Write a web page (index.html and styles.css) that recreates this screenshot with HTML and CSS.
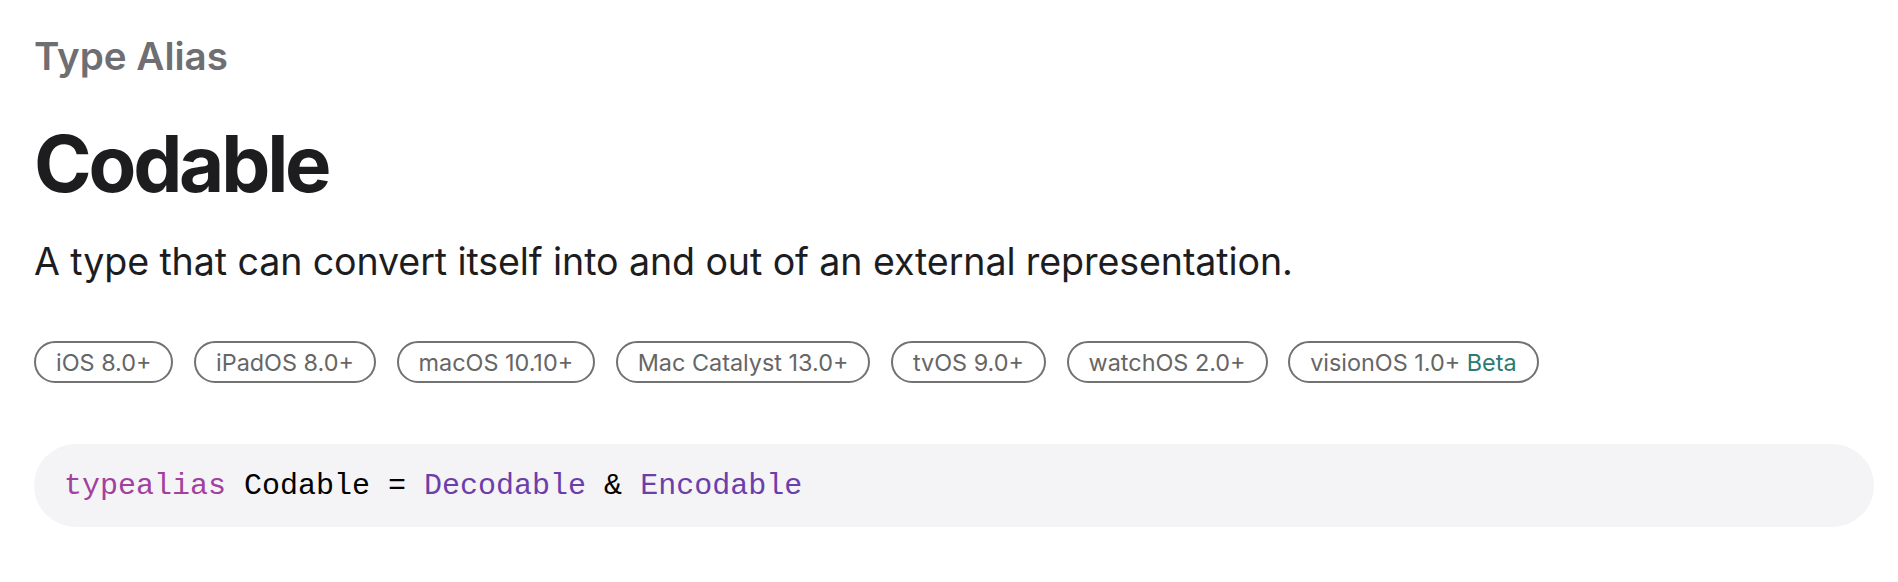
FILE: index.html
```html
<!DOCTYPE html>
<html lang="en">
<head>
<meta charset="utf-8">
<title>Codable</title>
<link rel="stylesheet" href="styles.css">
</head>
<body>
<main class="topic">
  <div class="eyebrow">Type Alias</div>
  <h1 class="title">Codable</h1>
  <p class="abstract">A type that can convert itself into and out of an external representation.</p>
  <ul class="availability">
    <li class="pill">iOS 8.0+</li>
    <li class="pill">iPadOS 8.0+</li>
    <li class="pill">macOS 10.10+</li>
    <li class="pill">Mac Catalyst 13.0+</li>
    <li class="pill">tvOS 9.0+</li>
    <li class="pill">watchOS 2.0+</li>
    <li class="pill">visionOS 1.0+ <span class="beta">Beta</span></li>
  </ul>
  <div class="declaration"><code><span class="kw">typealias</span> Codable = <span class="type">Decodable</span> &amp; <span class="type">Encodable</span></code></div>
</main>
</body>
</html>
```

FILE: styles.css
```css
html, body {
  margin: 0;
  padding: 0;
  background: #ffffff;
}

body {
  font-family: Inter, "Noto Sans", "Liberation Sans", sans-serif;
  color: #1d1d1f;
}

.topic {
  padding: 32px 24px 0 34px;
  display: flex;
  flex-direction: column;
}

.eyebrow {
  font-size: 38.6px;
  line-height: 48px;
  font-weight: 600;
  color: #6e6e73;
}

.title {
  margin: 41px 0 0;
  font-size: 78px;
  line-height: 86px;
  font-weight: 700;
  letter-spacing: -3.2px;
  color: #1d1d1f;
}

.abstract {
  margin: 31px 0 0;
  font-size: 37.6px;
  line-height: 48px;
  font-weight: 400;
  letter-spacing: -0.1px;
  color: #1d1d1f;
}

.availability {
  list-style: none;
  margin: 55px 0 0;
  padding: 0;
  display: flex;
  gap: 20.6px;
}

.pill {
  box-sizing: border-box;
  height: 42px;
  padding: 0 20px;
  border: 2px solid #727272;
  border-radius: 21px;
  display: flex;
  align-items: center;
  font-size: 23.4px;
  color: #666666;
  white-space: pre;
}

.beta {
  color: #2b7a73;
}

.declaration {
  margin-top: 61px;
  height: 83px;
  border-radius: 42px;
  background: #f4f4f6;
  display: flex;
  align-items: center;
  padding: 0 30px;
}

.declaration code {
  font-family: "Liberation Mono", "DejaVu Sans Mono", monospace;
  font-size: 30px;
  color: #000000;
}

.kw {
  color: #a2409f;
}

.type {
  color: #6c3eab;
}
```
